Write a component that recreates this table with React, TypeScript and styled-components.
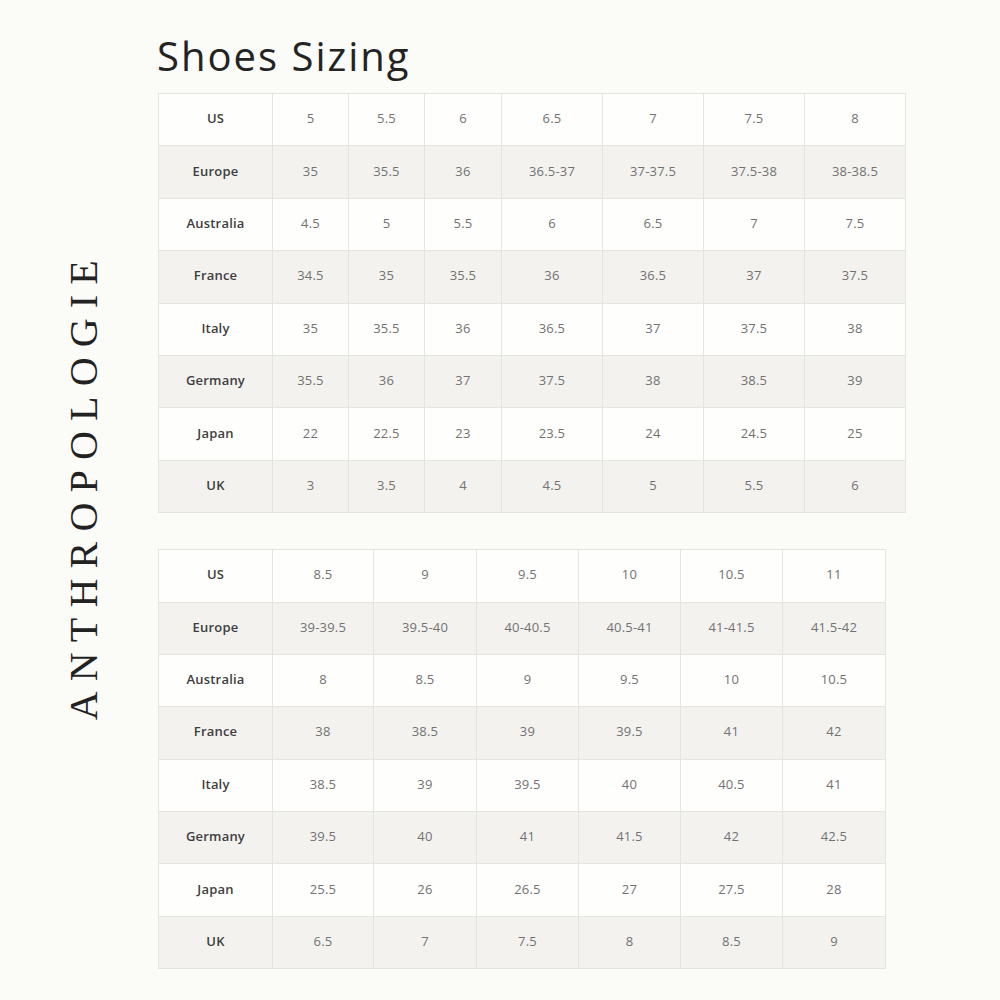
import styled, { createGlobalStyle } from "styled-components";

const GlobalStyle = createGlobalStyle`
  body {
    margin: 0;
    background: #fbfbf8;
    font-family: "Open Sans", Lato, sans-serif;
  }
`;

const first = {
  widths: [114, 76, 76, 77, 101, 101, 101, 101],
  rows: [
    ["US", "5", "5.5", "6", "6.5", "7", "7.5", "8"],
    ["Europe", "35", "35.5", "36", "36.5-37", "37-37.5", "37.5-38", "38-38.5"],
    ["Australia", "4.5", "5", "5.5", "6", "6.5", "7", "7.5"],
    ["France", "34.5", "35", "35.5", "36", "36.5", "37", "37.5"],
    ["Italy", "35", "35.5", "36", "36.5", "37", "37.5", "38"],
    ["Germany", "35.5", "36", "37", "37.5", "38", "38.5", "39"],
    ["Japan", "22", "22.5", "23", "23.5", "24", "24.5", "25"],
    ["UK", "3", "3.5", "4", "4.5", "5", "5.5", "6"],
  ],
};

const second = {
  widths: [114, 101, 103, 102, 102, 102, 103],
  rows: [
    ["US", "8.5", "9", "9.5", "10", "10.5", "11"],
    ["Europe", "39-39.5", "39.5-40", "40-40.5", "40.5-41", "41-41.5", "41.5-42"],
    ["Australia", "8", "8.5", "9", "9.5", "10", "10.5"],
    ["France", "38", "38.5", "39", "39.5", "41", "42"],
    ["Italy", "38.5", "39", "39.5", "40", "40.5", "41"],
    ["Germany", "39.5", "40", "41", "41.5", "42", "42.5"],
    ["Japan", "25.5", "26", "26.5", "27", "27.5", "28"],
    ["UK", "6.5", "7", "7.5", "8", "8.5", "9"],
  ],
};

const SizeTable = ({ data }: { data: { widths: number[]; rows: string[][] } }) => (
  <Table>
    <colgroup>
      {data.widths.map((w, i) => (
        <Col key={i} $w={w} />
      ))}
    </colgroup>
    <tbody>
      {data.rows.map((row, r) => (
        <Row key={r} $alt={r % 2 === 1}>
          {row.map((cell, c) =>
            c === 0 ? <Label key={c}>{cell}</Label> : <Cell key={c}>{cell}</Cell>
          )}
        </Row>
      ))}
    </tbody>
  </Table>
);

export default function App() {
  return (
    <Page>
      <GlobalStyle />
      <Brand>
        <Logo>ANTHROPOLOGIE</Logo>
      </Brand>
      <Main>
        <Title>Shoes Sizing</Title>
        <SizeTable data={first} />
        <Spacer />
        <SizeTable data={second} />
      </Main>
    </Page>
  );
}

const Page = styled.div`
  width: 1000px;
  height: 1000px;
  display: flex;
  box-sizing: border-box;
`;

const Brand = styled.div`
  width: 158px;
  display: flex;
  justify-content: center;
  padding-top: 250px;
  padding-left: 10px;
  box-sizing: border-box;
`;

const Logo = styled.div`
  writing-mode: vertical-rl;
  transform: rotate(180deg);
  align-self: flex-start;
  font-family: "Liberation Serif", "DejaVu Serif", serif;
  font-size: 40px;
  letter-spacing: 10.2px;
  color: #222;
  line-height: 1;
`;

const Main = styled.div`
  display: flex;
  flex-direction: column;
  align-items: flex-start;
  padding-top: 28px;
`;

const Title = styled.h1`
  margin: 0 0 9px -1px;
  font-family: "Open Sans", sans-serif;
  font-weight: 500;
  font-size: 40px;
  line-height: 56px;
  color: #232323;
  letter-spacing: 2px;
`;

const Spacer = styled.div`
  height: 36px;
`;

const Table = styled.table`
  border-collapse: collapse;
  table-layout: fixed;
  border: 1px solid #e4e4e1;
`;

const Col = styled.col<{ $w: number }>`
  width: ${({ $w }) => $w}px;
`;

const Row = styled.tr<{ $alt: boolean }>`
  height: 52.4px;
  background: ${({ $alt }) => ($alt ? "#f3f2ef" : "#fefefc")};
`;

const Cell = styled.td`
  border: 1px solid #e4e4e1;
  text-align: center;
  padding: 0 0 3px;
  font-size: 13px;
  color: #727272;
  letter-spacing: 0.2px;
`;

const Label = styled(Cell)`
  color: #3e3e3e;
  font-weight: 600;
`;
